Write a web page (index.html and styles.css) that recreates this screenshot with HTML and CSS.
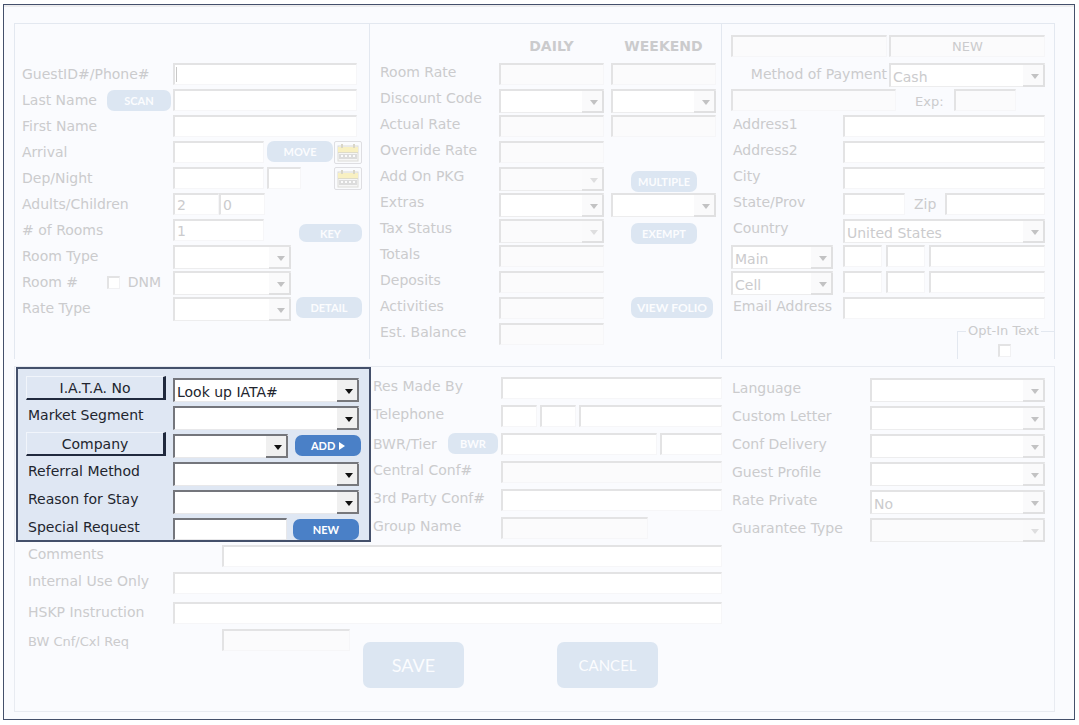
FILE: index.html
```html
<!DOCTYPE html>
<html lang="en">
<head>
  <meta charset="UTF-8" />
  <meta name="viewport" content="width=device-width, initial-scale=1.0"/>
  <title>Reservation</title>
  <link rel="stylesheet" href="styles.css">
</head>
<body>
  <svg class="defs" width="0" height="0" aria-hidden="true">
    <symbol id="calendar" viewBox="0 0 22 18">
      <rect x="1" y="2" width="20" height="15" fill="#f6f6f6" stroke="#dcdcd8"/>
      <rect x="1" y="3" width="20" height="5" fill="#f8f0c2"/>
      <path d="M5 0v4M17 0v4" stroke="#d9d6c8" stroke-width="2"/>
      <path d="M1 8.500h20" stroke="#dedbc9"/>
      <path d="M2 12.500h18" stroke="#dcdcdc" stroke-width="5"/>
      <path d="M4 12h14" stroke="#fbfbfb" stroke-width="2" stroke-dasharray="2 2"/>
    </symbol>
  </svg>

  <form class="frame" onsubmit="return false">

    <div class="top">
      <!-- guest and stay -->
      <section class="col guest">
        <div class="row"><label for="guestId">GuestID#/Phone#</label><div class="controls"><input type="text" id="guestId" class="grow caret"></div></div>
        <div class="row">
          <div class="side"><label for="lastName">Last Name</label><button type="button" class="btn scan">SCAN</button></div>
          <div class="controls"><input type="text" id="lastName" class="grow"></div>
        </div>
        <div class="row"><label for="firstName">First Name</label><div class="controls"><input type="text" id="firstName" class="grow"></div></div>
        <div class="row">
          <label for="arrival">Arrival</label>
          <div class="controls wide">
            <input type="text" id="arrival" class="w-date">
            <button type="button" class="btn">MOVE</button>
            <button type="button" class="cal" aria-label="Arrival date"><svg><use href="#calendar"/></svg></button>
          </div>
        </div>
        <div class="row">
          <label for="dep">Dep/Night</label>
          <div class="controls wide">
            <input type="text" id="dep" class="w-date">
            <input type="text" class="w-nights" aria-label="Nights">
            <button type="button" class="cal" aria-label="Departure date"><svg><use href="#calendar"/></svg></button>
          </div>
        </div>
        <div class="row">
          <label for="adults">Adults/Children</label>
          <div class="controls joined">
            <input type="text" id="adults" class="w-count" value="2">
            <input type="text" class="w-count" value="0" aria-label="Children">
          </div>
        </div>
        <div class="row">
          <label for="rooms"># of Rooms</label>
          <div class="controls wide">
            <input type="text" id="rooms" class="w-date" value="1">
            <button type="button" class="btn key">KEY</button>
          </div>
        </div>
        <div class="row"><label for="roomType">Room Type</label><div class="controls"><span class="drop w-room"><select id="roomType"><option></option></select></span></div></div>
        <div class="row">
          <div class="side"><label for="roomNo">Room #</label><span class="dnm"><input type="checkbox" id="dnm"><label for="dnm">DNM</label></span></div>
          <div class="controls"><span class="drop w-room"><select id="roomNo"><option></option></select></span></div>
        </div>
        <div class="row">
          <label for="rateType">Rate Type</label>
          <div class="controls wide">
            <span class="drop w-room"><select id="rateType"><option></option></select></span>
            <button type="button" class="btn">DETAIL</button>
          </div>
        </div>
      </section>

      <!-- rates -->
      <section class="col rates">
        <div class="row heads"><span></span><b>DAILY</b><b>WEEKEND</b></div>
        <div class="row"><label for="rate">Room Rate</label><input type="text" id="rate" disabled><input type="text" disabled aria-label="Weekend rate"></div>
        <div class="row">
          <label for="discount">Discount Code</label>
          <span class="drop"><select id="discount"><option></option></select></span>
          <span class="drop"><select aria-label="Weekend discount"><option></option></select></span>
        </div>
        <div class="row"><label for="actual">Actual Rate</label><input type="text" id="actual" disabled><input type="text" disabled aria-label="Weekend actual rate"></div>
        <div class="row"><label for="override">Override Rate</label><input type="text" id="override" disabled></div>
        <div class="row">
          <label for="addon">Add On PKG</label>
          <span class="drop off"><select id="addon" disabled><option></option></select></span>
          <button type="button" class="btn">MULTIPLE</button>
        </div>
        <div class="row">
          <label for="extras">Extras</label>
          <span class="drop"><select id="extras"><option></option></select></span>
          <span class="drop"><select aria-label="Weekend extras"><option></option></select></span>
        </div>
        <div class="row">
          <label for="tax">Tax Status</label>
          <span class="drop off"><select id="tax" disabled><option></option></select></span>
          <button type="button" class="btn">EXEMPT</button>
        </div>
        <div class="row"><label for="totals">Totals</label><input type="text" id="totals" disabled></div>
        <div class="row"><label for="deposits">Deposits</label><input type="text" id="deposits" disabled></div>
        <div class="row">
          <label for="activities">Activities</label><input type="text" id="activities" disabled>
          <button type="button" class="btn folio">VIEW FOLIO</button>
        </div>
        <div class="row"><label for="balance">Est. Balance</label><input type="text" id="balance" disabled></div>
      </section>

      <!-- payment and address -->
      <section class="col address">
        <div class="row halves first"><input type="text" disabled aria-label="Profile"><input type="text" class="status" value="NEW" disabled aria-label="Status"></div>
        <div class="row halves">
          <label for="payment">Method of Payment</label>
          <span class="drop"><select id="payment"><option>Cash</option></select></span>
        </div>
        <div class="row card">
          <input type="text" class="number" disabled aria-label="Card number">
          <label for="exp" class="small">Exp:</label>
          <input type="text" id="exp" disabled>
        </div>
        <div class="row"><label for="address1">Address1</label><div class="controls"><input type="text" id="address1" class="grow"></div></div>
        <div class="row"><label for="address2">Address2</label><div class="controls"><input type="text" id="address2" class="grow"></div></div>
        <div class="row"><label for="city">City</label><div class="controls"><input type="text" id="city" class="grow"></div></div>
        <div class="row">
          <label for="state">State/Prov</label>
          <div class="controls zip">
            <input type="text" id="state" class="w-state">
            <label for="zip">Zip</label>
            <input type="text" id="zip" class="grow">
          </div>
        </div>
        <div class="row"><label for="country">Country</label><div class="controls"><span class="drop grow"><select id="country"><option>United States</option></select></span></div></div>
        <div class="row">
          <span class="drop phone-kind"><select aria-label="Phone type"><option>Main</option></select></span>
          <div class="controls"><input type="text" class="w-area" aria-label="Country code"><input type="text" class="w-area" aria-label="Area code"><input type="text" class="grow" aria-label="Number"></div>
        </div>
        <div class="row">
          <span class="drop phone-kind"><select aria-label="Second phone type"><option>Cell</option></select></span>
          <div class="controls"><input type="text" class="w-area" aria-label="Country code"><input type="text" class="w-area" aria-label="Area code"><input type="text" class="grow" aria-label="Number"></div>
        </div>
        <div class="row"><label for="email">Email Address</label><div class="controls"><input type="text" id="email" class="grow"></div></div>
        <fieldset class="optin">
          <legend class="small">Opt-In Text</legend>
          <input type="checkbox" aria-label="Opt-In Text">
        </fieldset>
      </section>
    </div>

    <div class="bottom">
      <!-- active block -->
      <section class="active">
        <div class="row"><button type="button" class="raised">I.A.T.A. No</button><div class="controls"><span class="drop grow"><select aria-label="I.A.T.A. No"><option>Look up IATA#</option></select></span></div></div>
        <div class="row"><label for="market">Market Segment</label><div class="controls"><span class="drop grow"><select id="market"><option></option></select></span></div></div>
        <div class="row">
          <button type="button" class="raised">Company</button>
          <div class="controls wide">
            <span class="drop w-company"><select aria-label="Company"><option></option></select></span>
            <button type="button" class="btn">ADD <svg class="play" viewBox="0 0 6 8"><path d="M0 0L6 4L0 8z"/></svg></button>
          </div>
        </div>
        <div class="row"><label for="referral">Referral Method</label><div class="controls"><span class="drop grow"><select id="referral"><option></option></select></span></div></div>
        <div class="row"><label for="reason">Reason for Stay</label><div class="controls"><span class="drop grow"><select id="reason"><option></option></select></span></div></div>
        <div class="row">
          <label for="special">Special Request</label>
          <div class="controls">
            <input type="text" id="special" class="grow">
            <button type="button" class="btn">NEW</button>
          </div>
        </div>
      </section>

      <section class="source">
        <div class="row"><label for="madeBy">Res Made By</label><div class="controls"><input type="text" id="madeBy" class="grow"></div></div>
        <div class="row">
          <label for="tel">Telephone</label>
          <div class="controls"><input type="text" id="tel" class="w-tel"><input type="text" class="w-tel" aria-label="Area code"><input type="text" class="grow" aria-label="Number"></div>
        </div>
        <div class="row">
          <div class="side"><label for="bwr">BWR/Tier</label><button type="button" class="btn bwr">BWR</button></div>
          <div class="controls"><input type="text" id="bwr" class="grow"><input type="text" class="w-tier" aria-label="Tier"></div>
        </div>
        <div class="row"><label for="central">Central Conf#</label><div class="controls"><input type="text" id="central" class="grow" disabled></div></div>
        <div class="row"><label for="third">3rd Party Conf#</label><div class="controls"><input type="text" id="third" class="grow"></div></div>
        <div class="row"><label for="group">Group Name</label><div class="controls"><input type="text" id="group" class="w-group" disabled></div></div>
      </section>

      <section class="prefs">
        <div class="row"><label for="language">Language</label><span class="drop"><select id="language"><option></option></select></span></div>
        <div class="row"><label for="letter">Custom Letter</label><span class="drop"><select id="letter"><option></option></select></span></div>
        <div class="row"><label for="conf">Conf Delivery</label><span class="drop"><select id="conf"><option></option></select></span></div>
        <div class="row"><label for="profile">Guest Profile</label><span class="drop"><select id="profile"><option></option></select></span></div>
        <div class="row"><label for="private">Rate Private</label><span class="drop"><select id="private"><option>No</option></select></span></div>
        <div class="row"><label for="guarantee">Guarantee Type</label><span class="drop off"><select id="guarantee" disabled><option></option></select></span></div>
      </section>

      <section class="notes">
        <div class="row indent"><label for="comments">Comments</label><input type="text" id="comments"></div>
        <div class="row"><label for="internal">Internal Use Only</label><input type="text" id="internal"></div>
        <div class="row hskp"><label for="hskp">HSKP Instruction</label><input type="text" id="hskp"></div>
        <div class="row indent last">
          <label for="cnf" class="small">BW Cnf/Cxl Req</label>
          <div class="controls">
            <input type="text" id="cnf" class="w-cnf" disabled>
            <button type="submit" class="action save">SAVE</button>
            <button type="button" class="action cancel">CANCEL</button>
          </div>
        </div>
      </section>
    </div>
  </form>
</body>
</html>
```

FILE: styles.css
```css
* {
  box-sizing: border-box;
}
body {
  margin: 4px 4px 4px 3px;
  background: #fff;
  font-family: Verdana, "DejaVu Sans", sans-serif;
  font-size: 14px;
  color: #cbcbcd;
}
.defs {
  position: absolute;
}
.frame {
  border: 1px solid #44506b;
  background: #fafbfe;
  box-shadow: inset 0 2px 0 #ececee;
  padding: 18px 19px 7px 10px;
}

/* fields */
input, select, button {
  font: inherit;
  color: inherit;
  margin: 0;
  min-width: 0;
}
input[type="text"] {
  height: 22px;
  padding: 0 2px;
  background: #fff;
  border: 1px solid #f6f6f8;
  border-top: 2px solid #e3e3e4;
  border-left: 2px solid #e3e3e4;
  border-radius: 0;
}
input[type="text"]:disabled {
  background: #fbfbfc;
}
input[type="text"].caret {
  background: linear-gradient(#c8c8c8, #c8c8c8) no-repeat 1px 2px / 1px 15px #fff;
}
input[type="checkbox"] {
  appearance: none;
  width: 13px;
  height: 13px;
  background: #fff;
  border: 1px solid #f1f1f3;
  border-top: 2px solid #e3e3e4;
  border-left: 2px solid #e3e3e4;
}
.drop {
  position: relative;
  display: block;
  height: 24px;
}
.drop select {
  appearance: none;
  display: block;
  width: 100%;
  height: 100%;
  padding: 2px 20px 0 2px;
  background: #fff;
  border: 1px solid #ededee;
  border-top: 2px solid #e3e3e4;
  border-left: 2px solid #e3e3e4;
  border-radius: 0;
  opacity: 1;
}
.drop::before {
  content: "";
  position: absolute;
  top: 2px;
  right: 0;
  bottom: 0;
  width: 20px;
  background: #fafafb;
  border-right: 2px solid #e0e0e1;
  border-bottom: 2px solid #e0e0e1;
  pointer-events: none;
}
.drop::after {
  content: "";
  position: absolute;
  top: 11px;
  right: 6px;
  border: 4px solid transparent;
  border-top: 5px solid #c2c2c3;
  border-bottom: 0;
  pointer-events: none;
}
.drop.off select {
  background: #fbfbfc;
}
.drop.off::after {
  border-top-color: #dededf;
}

/* buttons */
.btn {
  flex: none;
  width: 66px;
  height: 21px;
  padding: 0;
  border: 0;
  border-radius: 7px;
  background: #dce6f2;
  color: #fbfcfe;
  font-family: Lato, sans-serif;
  font-size: 11px;
  font-weight: bold;
}
.cal {
  flex: none;
  width: 28px;
  height: 23px;
  padding: 1px 2px;
  background: #fafbfd;
  border: 1px solid #dedee2;
  border-radius: 2px;
}
.cal svg {
  display: block;
  width: 22px;
  height: 18px;
}
.action {
  width: 101px;
  height: 46px;
  padding: 0;
  border: 0;
  border-radius: 7px;
  background: #dce6f2;
  color: #fbfcfe;
  font-family: Lato, sans-serif;
}
.save {
  font-size: 18px;
}
.cancel {
  font-size: 15px;
}

/* rows */
.row {
  display: grid;
  align-items: start;
  height: 22px;
}
.row label {
  line-height: 18px;
  white-space: nowrap;
}
.side {
  display: flex;
  justify-content: space-between;
}
.controls {
  display: flex;
  align-items: flex-start;
  gap: 4px;
}
.grow {
  flex: 1;
}
.small {
  font-size: 13px;
}

/* top panel */
.top {
  display: grid;
  grid-template-columns: 355fr 352fr 334fr;
  border-top: 1px solid #e3e8f0;
}
.col {
  display: flex;
  flex-direction: column;
  gap: 4px;
  border-left: 1px solid #e3e8f0;
}
.guest {
  padding: 39px 12px 14px 7px;
}
.guest .row {
  grid-template-columns: 151px minmax(0, 1fr);
}
.guest .row label {
  line-height: 22px;
}
.guest .wide {
  gap: 3px;
  margin-right: -5px;
}
.guest .wide > :last-child {
  margin-left: auto;
}
.guest .wide > .btn + .cal {
  margin-left: -2px;
}
.guest .joined {
  gap: 0;
}
.scan {
  width: 64px;
  margin: 1px 2px 0 0;
}
.key {
  width: 63px;
  height: 18px;
  margin-top: 5px;
}
.dnm {
  display: flex;
  align-items: center;
  gap: 8px;
  margin-right: 12px;
}
.w-date { width: 91px; }
.w-nights { width: 34px; }
.w-count { width: 46px; }
.w-room { width: 118px; }

.rates {
  padding: 11px 5px 14px 10px;
}
.rates .row {
  grid-template-columns: 112px minmax(0, 1fr) minmax(0, 1fr);
  column-gap: 7px;
}
.rates .heads {
  height: 24px;
  line-height: 22px;
  text-align: center;
}
.rates .btn {
  margin: 4px 0 0 20px;
}
.rates .folio {
  width: 82px;
  margin-top: 0;
  font-size: 12px;
}

.address {
  padding: 11px 9px 0;
  border-right: 1px solid #e3e8f0;
}
.address .row {
  grid-template-columns: 112px minmax(0, 1fr);
}
.address .row > label {
  margin-left: 2px;
}
.address .halves {
  grid-template-columns: minmax(0, 1fr) minmax(0, 1fr);
  column-gap: 2px;
}
.address .halves > label {
  line-height: 22px;
  text-align: right;
}
.address .first {
  height: 24px;
}
.status {
  text-align: center;
  font-size: 13px;
}
.address .card {
  grid-template-columns: 165px 1fr 62px;
  margin-right: 29px;
}
.address .card .small {
  margin-left: 19px;
  line-height: 26px;
}
.address .zip {
  gap: 9px;
}
.address .zip label {
  line-height: 22px;
}
.phone-kind {
  margin-right: 10px;
}
.w-state { width: 62px; }
.w-area { width: 39px; }
.optin {
  align-self: flex-end;
  width: 97px;
  margin: 1px -9px 0 0;
  padding: 6px 0 2px 40px;
  border: 1px solid #e3e8f0;
  border-right: 0;
  border-bottom: 0;
}
.optin legend {
  margin-left: -32px;
  padding: 0 2px;
  line-height: 14px;
  white-space: nowrap;
}
.optin input {
  display: block;
}

/* bottom panel */
.bottom {
  display: grid;
  grid-template-columns: 356fr 351fr 332fr;
  margin-top: 7px;
  border: 1px solid #e8ebf1;
}
.active, .source, .prefs, .notes {
  display: flex;
  flex-direction: column;
  gap: 6px;
}
.active {
  margin-left: 1px;
  padding: 9px 10px 0 8px;
  border: 2px solid #44506b;
  background: #dfe7f3;
  color: #22252e;
}
.active .row {
  grid-template-columns: 147px minmax(0, 1fr);
}
.active label {
  padding-left: 2px;
}
.active .drop select,
.active input[type="text"] {
  border-color: #74767c #e8e8ea #e8e8ea #74767c;
}
.active .drop::before {
  background: #f0f0f0;
  border-color: #77787c;
}
.active .drop::after {
  border-top-color: #111;
}
.active .raised {
  width: 140px;
  height: 24px;
  margin-top: -2px;
  padding: 0;
  background: #dfe7f3;
  border: 1px solid #f1f5fb;
  border-right: 3px solid #20293d;
  border-bottom: 2px solid #20293d;
}
.active .btn {
  margin-top: 1px;
  background: #4a80c7;
  color: #fff;
}
.active .controls {
  gap: 6px;
}
.active .wide {
  justify-content: space-between;
  margin-right: -2px;
}
.w-company {
  width: 115px;
}
.play {
  width: 6px;
  height: 8px;
  margin-left: 1px;
  fill: #fff;
}

.source {
  padding: 10px 0 0 2px;
}
.source .row {
  grid-template-columns: 128px minmax(0, 1fr);
}
.source .controls {
  gap: 3px;
}
.source .side label {
  line-height: 22px;
}
.bwr {
  width: 50px;
  margin-right: 3px;
}
.w-tel { width: 36px; }
.w-tier { width: 62px; }
.w-group { width: 147px; }

.prefs {
  padding: 11px 9px 0 10px;
}
.prefs .row {
  grid-template-columns: 138px minmax(0, 1fr);
}
.prefs .row label {
  line-height: 20px;
}

.notes {
  grid-column: 1 / 3;
  gap: 5px;
  padding: 3px 0 23px 13px;
}
.notes .row {
  grid-template-columns: 145px minmax(0, 1fr);
}
.notes .indent {
  grid-template-columns: 194px minmax(0, 1fr);
}
.notes .hskp {
  margin-top: 3px;
}
.notes .hskp label {
  line-height: 20px;
}
.notes .last {
  height: auto;
}
.notes .last label {
  line-height: 26px;
}
.notes .last .controls {
  gap: 0;
}
.w-cnf { width: 128px; }
.save {
  margin: 13px 93px 0 13px;
}
.cancel {
  margin-top: 13px;
}
```
